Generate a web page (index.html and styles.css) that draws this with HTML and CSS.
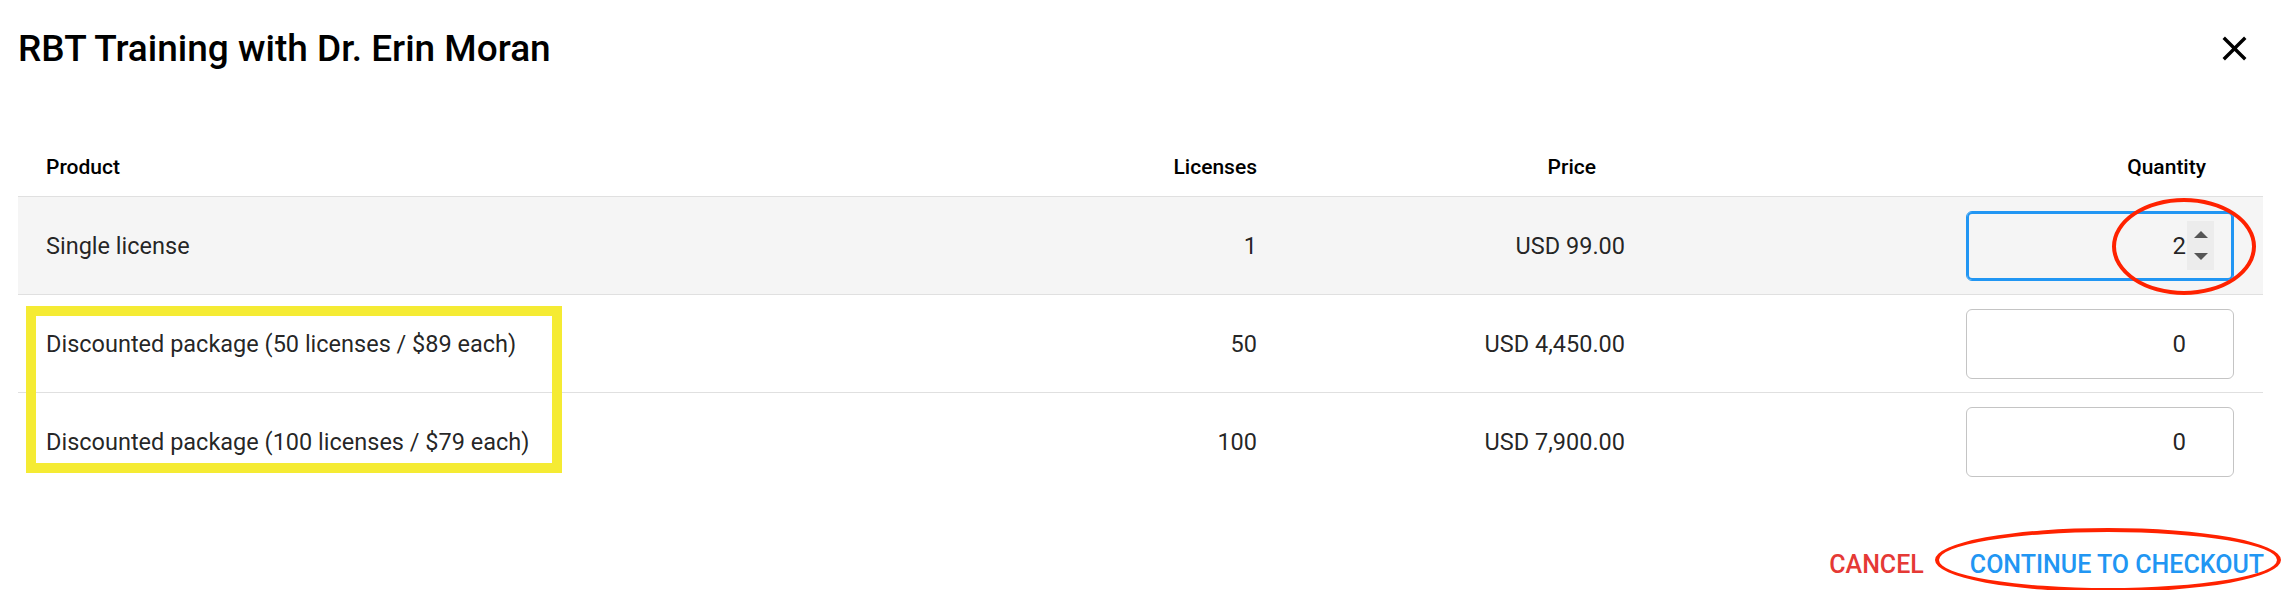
FILE: index.html
```html
<!DOCTYPE html>
<html lang="en">
<head>
    <meta charset="UTF-8">
    <meta name="viewport" content="width=device-width, initial-scale=1.0">
    <title>RBT Training with Dr. Erin Moran</title>
    <link rel="stylesheet" href="styles.css">
</head>
<body>

<div class="dialog">
    <div class="dialog-title">
        <h1>RBT Training with Dr. Erin Moran</h1>
        <button class="close" type="button" aria-label="Close">
            <svg viewBox="0 0 24 24" width="41" height="41">
                <path d="M19 6.41L17.59 5 12 10.59 6.41 5 5 6.41 10.59 12 5 17.59 6.41 19 12 13.41 17.59 19 19 17.59 13.41 12z" fill="#000"/>
            </svg>
        </button>
    </div>

    <table class="products">
        <colgroup>
            <col class="col-product">
            <col class="col-licenses">
            <col class="col-price">
            <col>
        </colgroup>
        <thead>
            <tr>
                <th class="product">Product</th>
                <th class="licenses">Licenses</th>
                <th class="price">Price</th>
                <th class="quantity">Quantity</th>
            </tr>
        </thead>
        <tbody>
            <tr class="selected">
                <td class="product">Single license</td>
                <td class="licenses">1</td>
                <td class="price">USD 99.00</td>
                <td class="quantity">
                    <div class="qty-field is-focused">
                        <input type="text" value="2">
                        <span class="spinner"><span class="up"></span><span class="down"></span></span>
                    </div>
                </td>
            </tr>
            <tr>
                <td class="product">Discounted package (50 licenses / $89 each)</td>
                <td class="licenses">50</td>
                <td class="price">USD 4,450.00</td>
                <td class="quantity">
                    <div class="qty-field">
                        <input type="text" value="0">
                        <span class="spinner"><span class="up"></span><span class="down"></span></span>
                    </div>
                </td>
            </tr>
            <tr>
                <td class="product">Discounted package (100 licenses / $79 each)</td>
                <td class="licenses">100</td>
                <td class="price">USD 7,900.00</td>
                <td class="quantity">
                    <div class="qty-field">
                        <input type="text" value="0">
                        <span class="spinner"><span class="up"></span><span class="down"></span></span>
                    </div>
                </td>
            </tr>
        </tbody>
    </table>

    <div class="dialog-actions">
        <button class="btn btn-cancel" type="button">Cancel</button>
        <button class="btn btn-continue" type="button">Continue to checkout</button>
    </div>
</div>

<!-- review annotations drawn over the screenshot -->
<div class="mark mark-box"></div>
<div class="mark mark-ring ring-qty"></div>
<div class="mark mark-ring ring-checkout"></div>

</body>
</html>
```

FILE: styles.css
```css
body {
    margin: 0;
    height: 590px;
    position: relative;
    overflow: hidden;
    font-family: Roboto, "Liberation Sans", sans-serif;
    color: #000;
    background-color: #fff;
}

.dialog {
    padding: 27px 21px 0 18px;
}

.dialog-title {
    display: flex;
    justify-content: space-between;
    align-items: center;
}

h1 {
    margin: 0;
    font-size: 37px;
    font-weight: 500;
    line-height: 43px;
}

.close {
    border: 0;
    background: none;
    padding: 0;
    margin-right: 8px;
    width: 41px;
    height: 41px;
    cursor: pointer;
}

.close svg {
    display: block;
}

/* table */

.products {
    width: 100%;
    margin-top: 67px;
    border-collapse: collapse;
    table-layout: fixed;
}

.col-product {
    width: 982px;
}

.col-licenses {
    width: 286px;
}

.col-price {
    width: 570px;
}

.products th {
    height: 59px;
    padding: 0;
    font-size: 21px;
    font-weight: 500;
    border-bottom: 1px solid #e0e0e0;
}

.products td {
    height: 97px;
    padding: 0;
    font-size: 23.5px;
    color: rgba(0, 0, 0, 0.87);
}

.products tbody tr {
    border-bottom: 1px solid #e0e0e0;
}

.products tbody tr:last-child {
    border-bottom: 0;
}

.products tr.selected {
    background-color: #f5f5f5;
}

.product {
    text-align: left;
    padding-left: 28px !important;
}

.licenses {
    text-align: right;
    padding-right: 29px !important;
}

.price {
    text-align: right;
}

th.price {
    padding-right: 260px !important;
}

td.price {
    padding-right: 231px !important;
}

th.quantity {
    text-align: right;
    padding-right: 57px !important;
}

td.quantity {
    padding-right: 29px !important;
}

/* quantity input */

.qty-field {
    display: flex;
    align-items: center;
    width: 268px;
    height: 70px;
    margin-left: auto;
    padding: 0 19px 0 10px;
    box-sizing: border-box;
    border: 1px solid #c4c4c4;
    border-radius: 6px;
    background-color: #fff;
}

.qty-field.is-focused {
    border-color: #2196f3;
    box-shadow: inset 0 0 0 2px #2196f3;
    background-color: transparent;
}

.qty-field input {
    flex: 1;
    min-width: 0;
    border: 0;
    padding: 0;
    background: transparent;
    font-family: Roboto, "Liberation Sans", sans-serif;
    font-size: 24px;
    color: rgba(0, 0, 0, 0.87);
    text-align: right;
    outline: none;
}

.spinner {
    width: 27px;
    height: 49px;
    margin-left: 1px;
    display: flex;
    flex-direction: column;
    justify-content: space-between;
    align-items: center;
    padding: 10px 0;
    box-sizing: border-box;
    background-color: #ececec;
    visibility: hidden;
}

.is-focused .spinner {
    visibility: visible;
}

.spinner .up,
.spinner .down {
    width: 0;
    height: 0;
    border-left: 7px solid transparent;
    border-right: 7px solid transparent;
}

.spinner .up {
    border-bottom: 7px solid #555;
}

.spinner .down {
    border-top: 7px solid #555;
}

/* actions */

.dialog-actions {
    display: flex;
    justify-content: flex-end;
    gap: 46px;
    margin-top: 57px;
    margin-right: -1px;
}

.btn {
    border: 0;
    background: none;
    padding: 0;
    font-family: Roboto, "Liberation Sans", sans-serif;
    font-size: 25px;
    font-weight: 500;
    line-height: 36px;
    text-transform: uppercase;
    cursor: pointer;
}

.btn-cancel {
    color: #e53935;
}

.btn-continue {
    color: #2196f3;
}

/* annotations */

.mark {
    position: absolute;
    box-sizing: border-box;
    pointer-events: none;
}

.mark-box {
    left: 26px;
    top: 306px;
    width: 536px;
    height: 167px;
    border: 10px solid #f5eb33;
}

.mark-ring {
    border: 4px solid #ff2200;
    border-radius: 50%;
}

.ring-qty {
    left: 2112px;
    top: 198px;
    width: 144px;
    height: 97px;
}

.ring-checkout {
    left: 1935px;
    top: 528px;
    width: 346px;
    height: 64px;
}
```
